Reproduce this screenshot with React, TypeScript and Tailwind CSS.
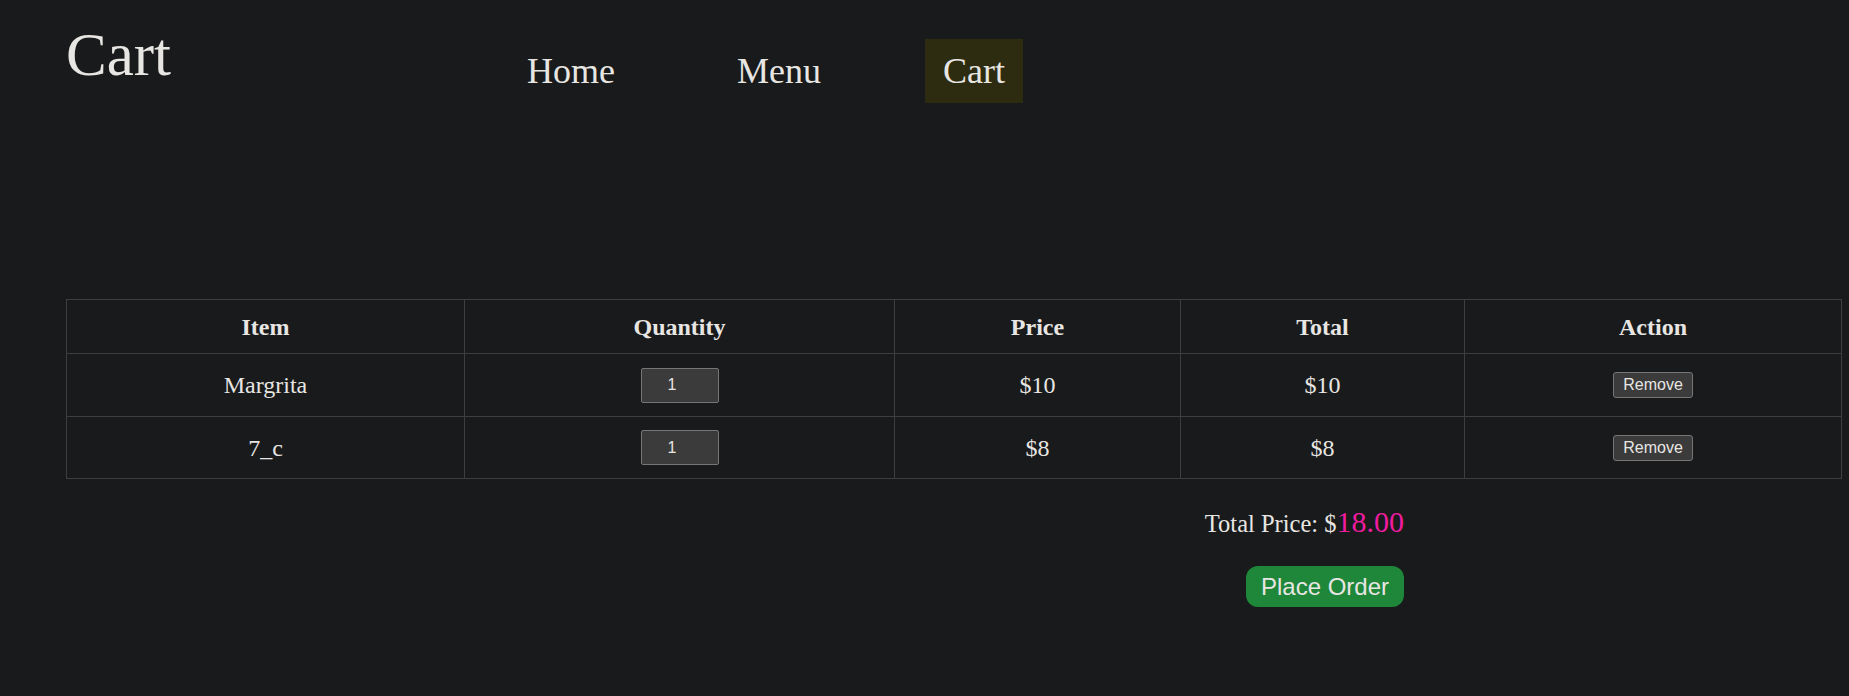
type CartItem = {
  name: string;
  qty: number;
  price: number;
};

const items: CartItem[] = [
  { name: "Margrita", qty: 1, price: 10 },
  { name: "7_c", qty: 1, price: 8 },
];

const NavLink = ({ label, active }: { label: string; active?: boolean }) => (
  <a
    href="#"
    className={
      active
        ? "px-[18px] py-[11px] leading-[42px] text-[36px] bg-[#2e2c10] text-[#e8e6e3]"
        : "px-[18px] py-[11px] leading-[42px] text-[36px] text-[#e8e6e3]"
    }
  >
    {label}
  </a>
);

export default function App() {
  const total = items.reduce((sum, i) => sum + i.qty * i.price, 0);

  return (
    <div className="min-h-[696px] bg-[#181a1b] text-[#e8e6e3] font-['Liberation_Serif','Times_New_Roman',serif] pl-[66px] pr-[8px]">
      <header className="flex items-start pt-[20px]">
        <h1 className="text-[61px] leading-[69px] font-normal">Cart</h1>
        <nav className="flex gap-[86px] ml-[338px] mt-[19px]">
          <NavLink label="Home" />
          <NavLink label="Menu" />
          <NavLink label="Cart" active />
        </nav>
      </header>

      <table className="table-fixed w-[1775px] border-collapse mt-[196px]">
        <colgroup>
          <col className="w-[398px]" />
          <col className="w-[430px]" />
          <col className="w-[286px]" />
          <col className="w-[284px]" />
          <col className="w-[377px]" />
        </colgroup>
        <thead>
          <tr className="h-[54px]">
            {["Item", "Quantity", "Price", "Total", "Action"].map((h) => (
              <th key={h} className="border border-[#3b3f42] text-[24px] font-bold text-center">
                {h}
              </th>
            ))}
          </tr>
        </thead>
        <tbody>
          {items.map((item, idx) => (
            <tr key={item.name} className={idx === 0 ? "h-[63px]" : "h-[62px]"}>
              <td className="border border-[#3b3f42] text-[24px] text-center">{item.name}</td>
              <td className="border border-[#3b3f42] text-center">
                <input
                  type="number"
                  defaultValue={item.qty}
                  className="w-[78px] h-[35px] pl-[26px] bg-[#3b3b3b] border border-[#767676] rounded-[2px] text-[16px] text-[#e8e6e3] font-['Liberation_Sans',Arial,sans-serif] align-middle [appearance:textfield] [&::-webkit-inner-spin-button]:appearance-none"
                />
              </td>
              <td className="border border-[#3b3f42] text-[24px] text-center">${item.price}</td>
              <td className="border border-[#3b3f42] text-[24px] text-center">${item.qty * item.price}</td>
              <td className="border border-[#3b3f42] text-center">
                <button className="h-[26px] w-[80px] bg-[#3b3b3b] border border-[#767676] rounded-[3px] text-[16px] leading-[20px] text-[#e8e6e3] font-['Liberation_Sans',Arial,sans-serif] align-middle">
                  Remove
                </button>
              </td>
            </tr>
          ))}
        </tbody>
      </table>

      <div className="flex flex-col items-end w-[1338px]">
        <div className="mt-[26px] text-[24.5px] leading-[34px]">
          Total Price: $<span className="text-[30px] text-[#f01ca0]">{total.toFixed(2)}</span>
        </div>
        <button className="mt-[25px] px-[15px] py-[7px] leading-[27px] text-[24px] bg-[#1f873a] text-[#e8e6e3] rounded-[12px] font-['Liberation_Sans',Arial,sans-serif]">
          Place Order
        </button>
      </div>
    </div>
  );
}
